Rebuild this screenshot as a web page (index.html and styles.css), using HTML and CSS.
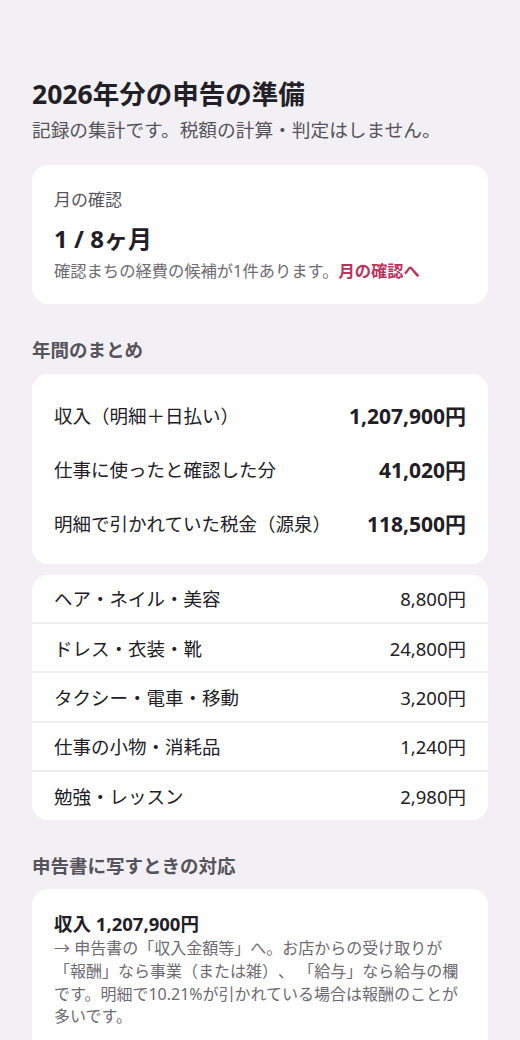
FILE: index.html
```html
<!DOCTYPE html>
<html lang="ja">
<head>
  <meta charset="UTF-8" />
  <meta name="viewport" content="width=device-width, initial-scale=1.0" />
  <title>2026年分の申告の準備</title>
  <link rel="stylesheet" href="styles.css">
</head>
<body>
  <main class="page">
    <header class="head">
      <h1 class="title">2026年分の申告の準備</h1>
      <p class="lead">記録の集計です。税額の計算・判定はしません。</p>
    </header>

    <!-- 月の確認 -->
    <section class="card month">
      <div class="month-label">月の確認</div>
      <div class="month-count">1 / 8ヶ月</div>
      <div class="month-note">確認まちの経費の候補が1件あります。<a class="link" href="#">月の確認へ</a></div>
    </section>

    <h2 class="sec-title">年間のまとめ</h2>
    <section class="card totals">
      <div class="total-row"><span>収入（明細＋日払い）</span><b>1,207,900円</b></div>
      <div class="total-row"><span>仕事に使ったと確認した分</span><b>41,020円</b></div>
      <div class="total-row"><span>明細で引かれていた税金（源泉）</span><b>118,500円</b></div>
    </section>

    <section class="card cats">
      <div class="cat-row"><span>ヘア・ネイル・美容</span><span>8,800円</span></div>
      <div class="cat-row"><span>ドレス・衣装・靴</span><span>24,800円</span></div>
      <div class="cat-row"><span>タクシー・電車・移動</span><span>3,200円</span></div>
      <div class="cat-row"><span>仕事の小物・消耗品</span><span>1,240円</span></div>
      <div class="cat-row"><span>勉強・レッスン</span><span>2,980円</span></div>
    </section>

    <h2 class="sec-title">申告書に写すときの対応</h2>
    <section class="card guide">
      <div class="guide-item">
        <div class="guide-head">収入 1,207,900円</div>
        <p class="guide-text">→ 申告書の「収入金額等」へ。お店からの受け取りが「報酬」なら事業（または雑）、 「給与」なら給与の欄です。明細で10.21%が引かれている場合は報酬のことが多いです。</p>
      </div>
    </section>
  </main>
</body>
</html>
```

FILE: styles.css
```css
:root {
  --bg: #f2f0f4;
  --card: #ffffff;
  --ink: #222026;
  --sub: #56535b;
  --muted: #6e6b72;
  --line: #efedf1;
  --accent: #b8355e;
}

html, body {
  margin: 0;
  padding: 0;
  background: var(--bg);
  color: var(--ink);
  font-family: "Noto Sans", "Noto Sans CJK JP", sans-serif;
  text-spacing-trim: space-all;
}

.page {
  padding: 76px 32px 40px;
  display: flex;
  flex-direction: column;
}

.title {
  margin: 0;
  font-size: 26.5px;
  font-weight: 700;
  line-height: 1.4;
}

.lead {
  margin: 3px 0 0;
  font-size: 18.7px;
  color: var(--sub);
  line-height: 1.5;
}

.card {
  background: var(--card);
  border-radius: 16px;
}

/* month check */
.month {
  margin-top: 21px;
  padding: 22px 22px 20px;
}
.month-label {
  font-size: 17px;
  color: var(--sub);
  line-height: 1.5;
}
.month-count {
  margin-top: 9px;
  font-size: 24px;
  font-weight: 700;
  line-height: 1.4;
}
.month-note {
  margin-top: 4px;
  font-size: 16.3px;
  color: var(--muted);
  line-height: 1.5;
}
.link {
  color: var(--accent);
  font-weight: 700;
  text-decoration: none;
}

.sec-title {
  margin: 33px 0 11px;
  font-size: 18.5px;
  font-weight: 700;
  color: var(--sub);
  line-height: 1.4;
}

/* yearly totals */
.totals {
  padding: 14px 22px;
}
.total-row {
  height: 54px;
  display: flex;
  align-items: center;
  justify-content: space-between;
  font-size: 18.5px;
}
.total-row b {
  font-size: 21px;
}

/* categories */
.cats {
  margin-top: 11px;
  display: flex;
  flex-direction: column;
  gap: 2px;
  background: var(--line);
  overflow: hidden;
}
.cat-row {
  height: 47.4px;
  padding: 0 22px;
  background: var(--card);
  display: flex;
  align-items: center;
  justify-content: space-between;
  font-size: 18.5px;
}

/* guide */
.guide {
  padding: 22px 22px 30px;
}
.guide-head {
  font-size: 18.5px;
  font-weight: 700;
  line-height: 1.4;
}
.guide-text {
  margin: 0;
  font-size: 16px;
  color: var(--muted);
  line-height: 1.42;
}
```
